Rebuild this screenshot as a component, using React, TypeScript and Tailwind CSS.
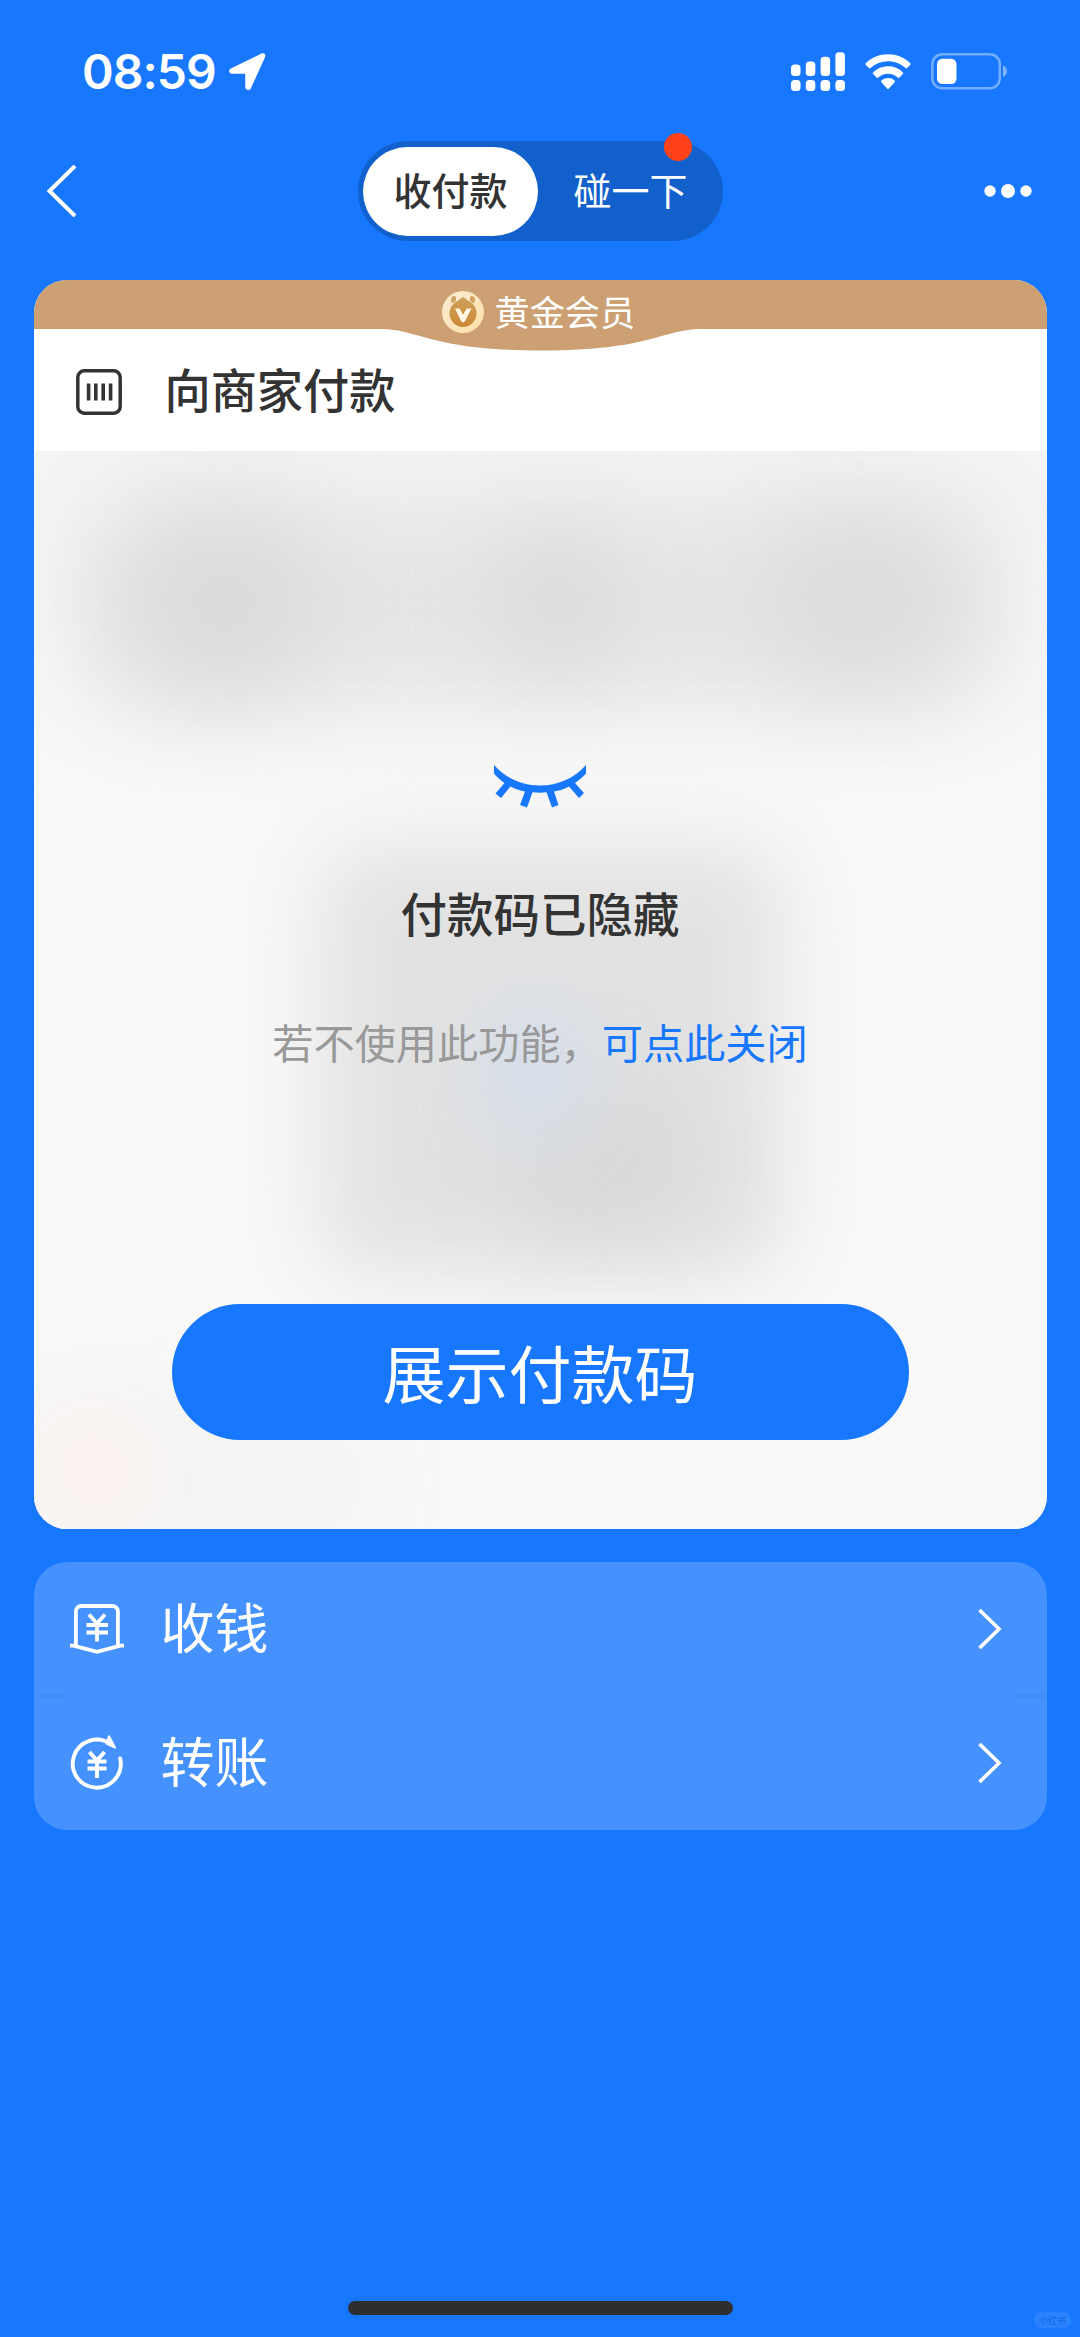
import React from 'react';

interface EntryRowProps {
  icon: React.ReactNode;
  label: string;
}

const SignalIcon: React.FC = () => (
  <svg width="54" height="39" viewBox="0 0 54 39" fill="currentColor">
    <rect x="0" y="12.5" width="9.5" height="11.5" rx="3.5" />
    <rect x="14.8" y="9.5" width="9.5" height="14.5" rx="3.5" />
    <rect x="29.6" y="4.8" width="9.5" height="19.2" rx="3.5" />
    <rect x="44.4" y="0.2" width="9.5" height="23.8" rx="3.5" />
    <rect x="0" y="28" width="9.5" height="11" rx="3.5" />
    <rect x="14.8" y="28" width="9.5" height="11" rx="3.5" />
    <rect x="29.6" y="28" width="9.5" height="11" rx="3.5" />
    <rect x="44.4" y="28" width="9.5" height="11" rx="3.5" />
  </svg>
);

const WifiIcon: React.FC = () => (
  <svg width="46" height="36" viewBox="0 0 46 36" fill="currentColor">
    <path d="M23 0.3C14.5 0.3 6.8 3.6 0.9 9.1a1.3 1.3 0 0 0 0 1.9l3 3.1a1.2 1.2 0 0 0 1.7 0A25.2 25.2 0 0 1 23 7.3c6.7 0 12.9 2.6 17.4 6.8a1.2 1.2 0 0 0 1.7 0l3-3.1a1.3 1.3 0 0 0 0-1.9C39.2 3.6 31.5 0.3 23 0.3Z" />
    <path d="M23 12.3c-5.7 0-10.9 2.2-14.8 5.9a1.2 1.2 0 0 0 0 1.8l3.3 3.5a1.2 1.2 0 0 0 1.7 0A14.3 14.3 0 0 1 23 19.7c3.8 0 7.2 1.4 9.8 3.8a1.2 1.2 0 0 0 1.7 0l3.3-3.5a1.2 1.2 0 0 0 0-1.8A21.5 21.5 0 0 0 23 12.3Z" />
    <path d="M23 24c-2.5 0-4.8.9-6.6 2.4a1.2 1.2 0 0 0 0 1.8l5.7 6.2a1.2 1.2 0 0 0 1.8 0l5.7-6.2a1.2 1.2 0 0 0 0-1.8A10.3 10.3 0 0 0 23 24Z" />
  </svg>
);

const BatteryIcon: React.FC = () => (
  <svg width="76" height="37" viewBox="0 0 76 37">
    <rect x="1.3" y="1.3" width="67.5" height="34" rx="10" fill="none" stroke="#fff" strokeOpacity="0.4" strokeWidth="2.5" />
    <rect x="6" y="5.7" width="19.5" height="25.3" rx="5.5" fill="#fff" />
    <path d="M72 12.5c2.6 1 4 3.2 4 5.8s-1.4 4.8-4 5.8Z" fill="#fff" fillOpacity="0.45" />
  </svg>
);

const LocationIcon: React.FC = () => (
  <svg width="37" height="38" viewBox="0 0 37 38" fill="currentColor">
    <path d="M32.6 0.5 1.8 15.4C-0.9 16.7 0 20.7 3 20.7L15.2 20.8C15.9 20.8 16.2 21.2 16.2 21.8L16.3 34C16.3 37.3 20.5 38.2 21.9 35.2L36 4.3C37.2 1.6 35.2-0.7 32.6 0.5Z" />
  </svg>
);

const MemberBadge: React.FC = () => (
  <svg width="42" height="42" viewBox="0 0 42 42">
    <defs>
      <linearGradient id="rim" x1="0" y1="0" x2="1" y2="1">
        <stop offset="0" stopColor="#f9ebd3" />
        <stop offset="1" stopColor="#ffe0a8" />
      </linearGradient>
      <linearGradient id="face" x1="0" y1="0" x2="0" y2="1">
        <stop offset="0" stopColor="#cfa05a" />
        <stop offset="1" stopColor="#cb8837" />
      </linearGradient>
    </defs>
    <circle cx="21" cy="21" r="21" fill="url(#rim)" />
    <ellipse cx="11.5" cy="8.5" rx="2.5" ry="3.6" fill="#cfa364" transform="rotate(15 11.5 8.5)" />
    <ellipse cx="30.5" cy="8.5" rx="2.5" ry="3.6" fill="#cfa364" transform="rotate(-15 30.5 8.5)" />
    <path d="M21 6 30.5 12.8A13.5 13.5 0 1 1 11.5 12.8Z" fill="url(#face)" />
    <path d="M13 17.5h4.7L21 23.8l3.6-6.3H29.5L23 30.3c-.8 1.5-3 1.5-3.8 0Z" fill="#fff6e4" />
  </svg>
);

const BarcodeIcon: React.FC = () => (
  <svg width="46" height="46" viewBox="0 0 46 46" fill="none" stroke="#333">
    <rect x="1.8" y="1.8" width="42.4" height="42.4" rx="6.5" strokeWidth="3.5" />
    <path d="M12.6 14.5v17M19.8 14.5v17M27.2 14.5v17M34.6 14.5v17" strokeWidth="3.6" />
  </svg>
);

const ClosedEyeIcon: React.FC = () => (
  <svg width="92" height="43" viewBox="0 0 92 43" fill="#1777ff">
    <path d="M0 0C12 13.5 28 20.5 46 20.5S80 13.5 92 0V8.5C89 12 85 15 81 18L90 28 85 33 75 21.5C70.5 24 65 25.7 60 26.5L64.5 40 58 42.5 52.5 27.3C48 27.9 43 27.9 38.5 27.3L33 42.5 26 40 31 26.5C26 25.5 21 24 16.5 21.5L7 33 1.5 28.5 10.5 18C7 15.5 3 12.5 0 8.5Z" />
  </svg>
);

const CollectIcon: React.FC = () => (
  <svg width="54" height="50" viewBox="0 0 54 50" fill="none" stroke="#fff" strokeWidth="3.8">
    <path d="M0 41.7H5.9V7.5C5.9 4.2 8.2 2 11.5 2H42.3C45.6 2 47.9 4.2 47.9 7.5V41.7H54M3.5 41.7 27 47.8 50.5 41.7" />
    <path d="M19 10.5 27 19.5 35 10.5M27 18V37.5M16.5 21H38M16.5 28.5H38" />
  </svg>
);

const TransferIcon: React.FC = () => (
  <svg width="54" height="55" viewBox="0 0 54 55" fill="none" stroke="#fff" strokeWidth="3.9">
    <path d="M50.2 23.5A24 24 0 1 1 40.5 9" strokeLinecap="round" />
    <path d="M39 1.2 45 12.5 36.5 8.5Z" fill="#fff" strokeWidth="2" strokeLinejoin="round" />
    <path d="M19.5 17 27 25.5 34.5 17M27 24V43M17.5 26.5H36.5M17.5 33.5H36.5" />
  </svg>
);

const EntryRow: React.FC<EntryRowProps> = ({ icon, label }) => (
  <div className="flex h-[134px] items-center pl-9 pr-[45px] text-white">
    {icon}
    <span className="ml-[37px] flex-grow pb-1.5 text-[54px] leading-none">{label}</span>
    <svg width="24" height="40" viewBox="0 0 24 40" fill="none" stroke="#fff" strokeWidth="3.6">
      <path d="M1.5 1 21 20 1.5 39" />
    </svg>
  </div>
);

const App: React.FC = () => {
  return (
    <div className="relative flex h-[2337px] w-[1080px] flex-col overflow-hidden bg-[#1777ff] font-['Noto_Sans_CJK_SC',sans-serif]">

      {/* Status bar */}
      <div className="flex h-[141px] shrink-0 items-start justify-between pl-[82px] pr-[73px] text-white">
        <div className="flex items-center gap-[14px] pt-[53px]">
          <span className="h-[38px] w-[133px] whitespace-nowrap font-['Inter'] text-[48px] font-semibold leading-[38px] tracking-[-1px]">08:59</span>
          <LocationIcon />
        </div>
        <div className="flex items-center gap-5 pt-[52px]">
          <SignalIcon />
          <WifiIcon />
          <BatteryIcon />
        </div>
      </div>

      {/* Nav bar */}
      <div className="flex h-[100px] shrink-0 items-center pl-[46px] pr-[48px]">
        <svg width="31" height="52" viewBox="0 0 31 52" fill="none" stroke="#fff" strokeWidth="4">
          <path d="M29 1 3.5 26 29 51" />
        </svg>
        <div className="relative ml-[281px] flex h-[100px] w-[365px] items-center rounded-full bg-[#1160cb] pl-[5px] text-[38px] leading-none">
          <div className="flex h-[89px] w-[175px] items-center justify-center rounded-full bg-white pb-1 font-medium text-[#333]">收付款</div>
          <div className="flex flex-grow items-center justify-center pb-1 text-white">碰一下</div>
          <span className="absolute -top-2 right-[31px] h-7 w-7 rounded-full bg-[#ff421a]" />
        </div>
        <svg className="ml-auto" width="48" height="16" viewBox="0 0 48 16" fill="#fff">
          <circle cx="6" cy="8" r="5.7" />
          <circle cx="24" cy="8" r="7" />
          <circle cx="42" cy="8" r="5.7" />
        </svg>
      </div>

      {/* Payment card */}
      <div className="mx-[33.5px] mt-[38.5px] flex h-[1249px] shrink-0 flex-col overflow-hidden rounded-[33px] bg-white">
        <div className="relative h-[49.5px] shrink-0 bg-[#cca073]">
          <svg className="absolute left-[346px] top-[49px]" width="322" height="22" viewBox="0 0 322 22" fill="#cca073">
            <path d="M0 0C40 0 50 21.5 161 21.5S282 0 322 0Z" />
          </svg>
          <div className="relative flex items-center pl-[408px] pt-[11.5px] text-white">
            <MemberBadge />
            <span className="ml-[11px] pb-[3px] text-[35.2px] leading-[39px]">黄金会员</span>
          </div>
        </div>
        <div className="flex h-[122px] shrink-0 items-center pl-[42px] pt-[3px]">
          <BarcodeIcon />
          <h1 className="ml-[43px] pb-1.5 text-[46.2px] font-medium leading-none text-[#333]">向商家付款</h1>
        </div>

        {/* Hidden code area, the codes show through as soft shadows */}
        <div className="relative flex flex-grow flex-col items-center overflow-hidden bg-linear-to-b from-[#f5f5f5] to-[#f9f9f9] to-30%">
          <div className="absolute left-[45px] top-[50px] h-[205px] w-[925px] rounded-[60px] bg-[#e5e5e5] blur-[50px]" />
          <div className="absolute left-[95px] top-[60px] h-[180px] w-[190px] rounded-full bg-[#dadada] blur-[48px]" />
          <div className="absolute left-[470px] top-[80px] h-[140px] w-[110px] rounded-full bg-[#d9d9d9] blur-[46px]" />
          <div className="absolute left-[730px] top-[65px] h-[165px] w-[190px] rounded-full bg-[#dbdbdb] blur-[48px]" />
          <div className="absolute left-[285px] top-[395px] h-[430px] w-[465px] rounded-[40px] bg-[#e2e2e2] blur-[42px]" />
          <div className="absolute left-[470px] top-[630px] h-[160px] w-[200px] rounded-full bg-[#d9d9d9] blur-[46px]" />
          <div className="absolute left-[445px] top-[550px] h-[140px] w-[110px] rounded-full bg-[#d5deeb] blur-[40px]" />
          <div className="absolute -left-[20px] top-[950px] h-[160px] w-[380px] rounded-full bg-[#f4f4f4] blur-[45px]" />
          <div className="absolute left-[10px] top-[965px] h-[110px] w-[100px] rounded-full bg-[#fdf1ed] blur-[36px]" />

          <div className="relative flex w-full flex-col items-center pt-[314px]">
            <ClosedEyeIcon />
            <h2 className="mt-[80px] text-[46.5px] font-medium leading-[48px] text-[#333]">付款码已隐藏</h2>
            <p className="mt-[83px] text-[41.2px] leading-[44px] text-[#999]">
              若不使用此功能，<span className="text-[#1777ff]">可点此关闭</span>
            </p>
            <button className="mt-[241px] h-[136px] w-[737px] rounded-full bg-[#1777ff] pb-1 text-[63px] leading-none text-white">展示付款码</button>
          </div>
        </div>
      </div>

      {/* Other entries */}
      <div className="mx-[33.5px] mt-[33px] shrink-0 overflow-hidden rounded-[33px] bg-[#4592ff]">
        <EntryRow icon={<CollectIcon />} label="收钱" />
        <div className="-my-px flex h-[2px] justify-between">
          <span className="ml-[3px] w-7 bg-[#3f8bfa]" />
          <span className="w-8 bg-[#3f8bfa]" />
        </div>
        <EntryRow icon={<TransferIcon />} label="转账" />
      </div>

      {/* Home indicator */}
      <div className="mt-auto flex h-[36px] shrink-0 justify-center">
        <div className="h-[14px] w-[385px] rounded-full bg-[#2e2e2e]" />
      </div>
      <div className="absolute bottom-[9px] right-[9px] flex h-4 w-[37px] items-center justify-center rounded-full bg-[#2a82ff] text-[9px] leading-none text-[#1768e2]">小红书</div>
    </div>
  );
};

export default App;
